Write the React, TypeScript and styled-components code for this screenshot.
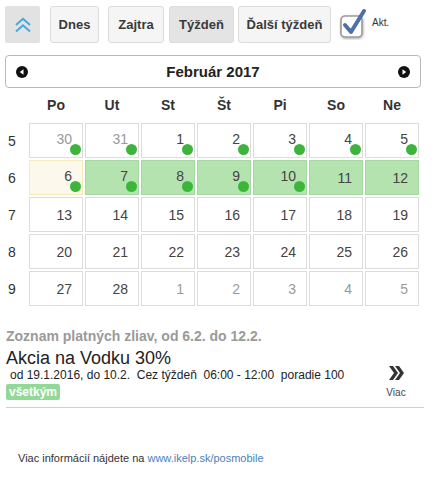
import styled, {createGlobalStyle} from 'styled-components'

const GlobalStyle = createGlobalStyle`
  body {
    margin: 0;
    background: #fff;
    font-family: 'Liberation Sans', Arial, sans-serif;
    color: #333;
  }
`

type Day = {n: number; muted?: boolean; dot?: boolean; on?: boolean; today?: boolean}

const weeks: {no: number; days: Day[]}[] = [
  {
    no: 5,
    days: [
      {n: 30, muted: true, dot: true},
      {n: 31, muted: true, dot: true},
      {n: 1, dot: true},
      {n: 2, dot: true},
      {n: 3, dot: true},
      {n: 4, dot: true},
      {n: 5, dot: true},
    ],
  },
  {
    no: 6,
    days: [
      {n: 6, dot: true, today: true},
      {n: 7, dot: true, on: true},
      {n: 8, dot: true, on: true},
      {n: 9, dot: true, on: true},
      {n: 10, dot: true, on: true},
      {n: 11, on: true},
      {n: 12, on: true},
    ],
  },
  {no: 7, days: [13, 14, 15, 16, 17, 18, 19].map((n) => ({n}))},
  {no: 8, days: [20, 21, 22, 23, 24, 25, 26].map((n) => ({n}))},
  {
    no: 9,
    days: [
      {n: 27},
      {n: 28},
      {n: 1, muted: true},
      {n: 2, muted: true},
      {n: 3, muted: true},
      {n: 4, muted: true},
      {n: 5, muted: true},
    ],
  },
]

const dayNames = ['Po', 'Ut', 'St', 'Št', 'Pi', 'So', 'Ne']

const Page = styled.div`
  width: 445px;
`

const Toolbar = styled.div`
  display: flex;
  align-items: flex-start;
  padding: 6px 0 0 5px;
  height: 37px;
`

const UpButton = styled.button`
  width: 35px;
  height: 37px;
  border: none;
  background: #e2e2e2;
  border-radius: 2px;
  display: flex;
  align-items: center;
  justify-content: center;
  padding: 0;
`

const Btn = styled.button<{$w: number; $ml: number; $active?: boolean}>`
  width: ${(p) => p.$w}px;
  margin-left: ${(p) => p.$ml}px;
  height: 37px;
  border: 1px solid #dcdcdc;
  border-radius: 3px;
  background: ${(p) => (p.$active ? '#e4e4e4' : '#f5f5f5')};
  font-family: 'Liberation Sans', Arial, sans-serif;
  font-size: 13px;
  font-weight: bold;
  color: #3a3a3a;
  padding: 0;
`

const CheckWrap = styled.div`
  margin-left: 8px;
  width: 30px;
  height: 37px;
`

const AktLabel = styled.span`
  margin-left: 3px;
  margin-top: 11px;
  font-size: 10px;
  color: #333;
`

const Calendar = styled.div`
  margin: 12px 0 0 5px;
  width: 416px;
`

const MonthBar = styled.div`
  height: 31px;
  border: 1px solid #b8b8b8;
  border-radius: 4px;
  display: flex;
  align-items: center;
  justify-content: space-between;
  padding: 0 10px;
`

const MonthTitle = styled.div`
  font-size: 15px;
  font-weight: bold;
  color: #222;
`

const Grid = styled.div`
  display: grid;
  grid-template-columns: 22px repeat(7, 54px);
  column-gap: 2px;
  row-gap: 2px;
  margin-top: 1px;
`

const DayName = styled.div`
  height: 32px;
  display: flex;
  align-items: center;
  justify-content: center;
  font-size: 14px;
  font-weight: bold;
  color: #333;
`

const WeekNo = styled.div`
  height: 35px;
  display: flex;
  align-items: center;
  padding-left: 3px;
  font-size: 14px;
  color: #333;
`

const Cell = styled.div<{$muted?: boolean; $on?: boolean; $today?: boolean}>`
  position: relative;
  box-sizing: border-box;
  height: 35px;
  border: 1px solid ${(p) => (p.$on ? '#a6d8a1' : p.$today ? '#f6e9bc' : '#dcdcdc')};
  background: ${(p) => (p.$on ? '#b4e3b0' : p.$today ? '#fcf9ec' : '#fff')};
  display: flex;
  align-items: center;
  justify-content: flex-end;
  padding-right: 10px;
  font-size: 14px;
  color: ${(p) => (p.$muted ? '#9a9a9a' : '#444')};
`

const Num = styled.span<{$up?: boolean}>`
  margin-top: ${(p) => (p.$up ? '-4px' : '0')};
`

const Dot = styled.span`
  position: absolute;
  right: 1px;
  bottom: 2px;
  width: 11px;
  height: 11px;
  border-radius: 50%;
  background: #3db53d;
`

const ListSection = styled.div`
  padding: 22px 3px 0 6px;
  width: 420px;
  box-sizing: border-box;
`

const ListTitle = styled.div`
  font-size: 14px;
  font-weight: bold;
  color: #9a9a9a;
`

const Item = styled.div`
  display: flex;
  align-items: flex-start;
  border-bottom: 1px solid #cfcfcf;
  padding: 4px 0 7px;
  width: 418px;
`

const ItemBody = styled.div`
  flex: 1;
`

const ItemName = styled.div`
  font-size: 18px;
  color: #222;
  line-height: 20px;
`

const ItemMeta = styled.div`
  font-size: 12px;
  color: #222;
  margin: 0 0 0 4px;
  white-space: pre;
`

const Badge = styled.span`
  display: inline-block;
  margin-top: 1px;
  background: #92d896;
  color: #fff;
  font-weight: bold;
  font-size: 12px;
  padding: 1px 3px;
  border-radius: 2px;
`

const More = styled.div`
  width: 40px;
  margin-top: 18px;
  margin-right: 8px;
  display: flex;
  flex-direction: column;
  align-items: center;
  font-size: 10px;
  color: #444;
`

const MoreLabel = styled.span`
  margin-top: 7px;
`

const Footer = styled.div`
  padding: 44px 0 0 18px;
  font-size: 11px;
  color: #333;

  a {
    color: #4c7fc0;
    text-decoration: none;
  }
`

const NavArrow = ({dir}: {dir: 'l' | 'r'}) => (
  <svg width="12" height="12" viewBox="0 0 12 12">
    <circle cx="6" cy="6" r="6" fill="#111" />
    {dir === 'l' ? <path d="M7.5 3.2 L3.8 6 L7.5 8.8 Z" fill="#fff" /> : <path d="M4.5 3.2 L8.2 6 L4.5 8.8 Z" fill="#fff" />}
  </svg>
)

export default function App() {
  return (
    <Page>
      <GlobalStyle />
      <Toolbar>
        <UpButton>
          <svg width="18" height="18" viewBox="0 0 18 18" fill="none" stroke="#47a8d9" strokeWidth="2">
            <path d="M2 9 L9 2.8 L16 9" />
            <path d="M2 15.5 L9 9.3 L16 15.5" />
          </svg>
        </UpButton>
        <Btn $w={49} $ml={10}>Dnes</Btn>
        <Btn $w={56} $ml={9}>Zajtra</Btn>
        <Btn $w={65} $ml={5} $active>Týždeň</Btn>
        <Btn $w={93} $ml={4}>Ďalší týždeň</Btn>
        <CheckWrap>
          <svg width="32" height="34" viewBox="0 0 32 34">
            <defs>
              <filter id="sh" x="-30%" y="-30%" width="160%" height="160%">
                <feDropShadow dx="0.5" dy="1" stdDeviation="1" floodColor="#000" floodOpacity="0.35" />
              </filter>
            </defs>
            <rect x="2" y="10" width="21" height="21" rx="4" fill="#fff" stroke="#9a9a9a" strokeWidth="1.6" filter="url(#sh)" />
            <path d="M6 19 L12 26 L25 5" fill="none" stroke="#4f6fa8" strokeWidth="4" strokeLinecap="round" strokeLinejoin="round" />
          </svg>
        </CheckWrap>
        <AktLabel>Akt.</AktLabel>
      </Toolbar>

      <Calendar>
        <MonthBar>
          <NavArrow dir="l" />
          <MonthTitle>Február 2017</MonthTitle>
          <NavArrow dir="r" />
        </MonthBar>
        <Grid>
          <div />
          {dayNames.map((d) => (
            <DayName key={d}>{d}</DayName>
          ))}
          {weeks.map((w) => [
            <WeekNo key={`w${w.no}`}>{w.no}</WeekNo>,
            ...w.days.map((d, i) => (
              <Cell key={`${w.no}-${i}`} $muted={d.muted} $on={d.on} $today={d.today}>
                <Num $up={d.dot}>{d.n}</Num>
                {d.dot && <Dot />}
              </Cell>
            )),
          ])}
        </Grid>
      </Calendar>

      <ListSection>
        <ListTitle>Zoznam platných zliav, od 6.2. do 12.2.</ListTitle>
        <Item>
          <ItemBody>
            <ItemName>Akcia na Vodku 30%</ItemName>
            <ItemMeta>od 19.1.2016, do 10.2.  Cez týždeň  06:00 - 12:00  poradie 100</ItemMeta>
            <Badge>všetkým</Badge>
          </ItemBody>
          <More>
            <svg width="16" height="14" viewBox="0 0 16 14" fill="#333">
              <path d="M1 0 H5 L10 7 L5 14 H1 L6 7 Z" />
              <path d="M7 0 H11 L16 7 L11 14 H7 L12 7 Z" />
            </svg>
            <MoreLabel>Viac</MoreLabel>
          </More>
        </Item>
      </ListSection>

      <Footer>
        Viac informácií nájdete na <a href="#">www.ikelp.sk/posmobile</a>
      </Footer>
    </Page>
  )
}
